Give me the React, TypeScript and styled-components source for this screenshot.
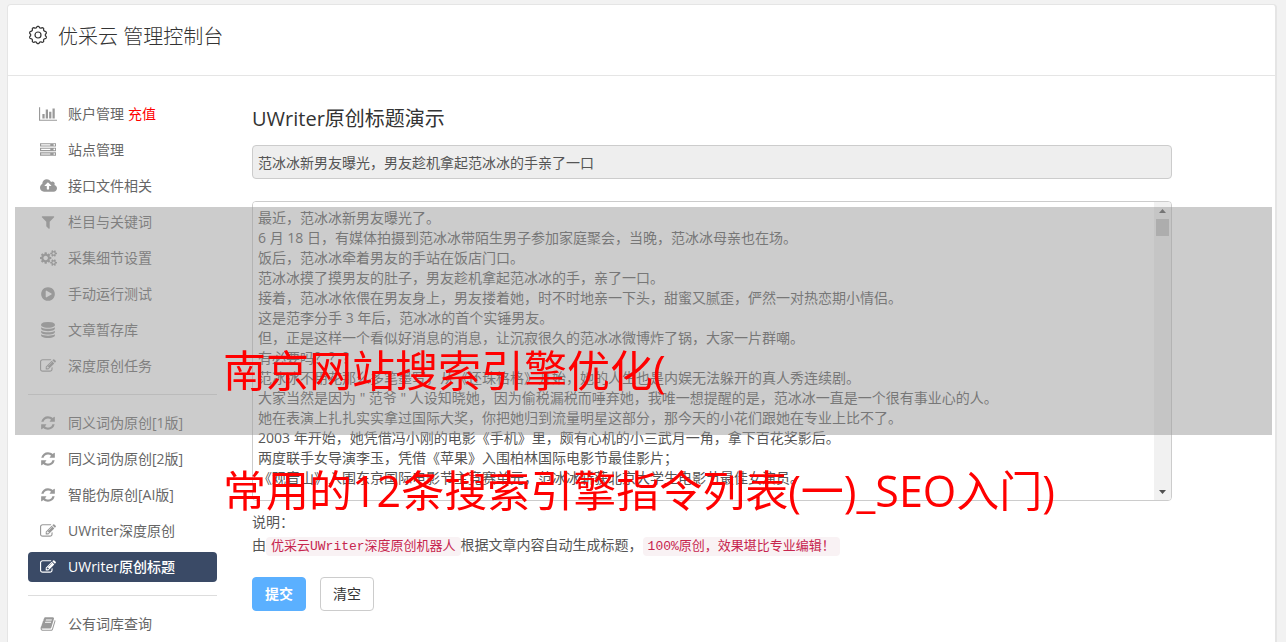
import React from "react";
import styled, { createGlobalStyle, css } from "styled-components";

const GlobalStyle = createGlobalStyle`
  *, *::before, *::after { box-sizing: border-box; }
  body {
    margin: 0;
    background: #f2f2f2;
    color: #555;
    font: 14px/20px "Open Sans", "Noto Sans CJK SC", sans-serif;
  }
  button, input, textarea { font: inherit; color: inherit; }
`;

const Page = styled.div`
  position: relative;
  min-height: 100vh;
  padding: 4px 9px 0 7px;
`;

const Card = styled.div`
  min-height: calc(100vh - 4px);
  background: #fff;
  border: 1px solid #e5e5e5;
  border-right-width: 2px;
  border-bottom: 0;
  border-radius: 4px 4px 0 0;
`;

const Header = styled.header`
  display: flex;
  align-items: flex-start;
  gap: 10px;
  height: 71px;
  padding: 17px 20px;
  border-bottom: 1px solid #e5e5e5;
  color: #333;

  svg { margin-top: 3px; }
`;

const HeaderTitle = styled.h1`
  margin: 0;
  font-size: 20px;
  line-height: 30px;
  font-weight: 300;
`;

const Columns = styled.div`
  display: flex;
  gap: 35px;
  padding: 23px 103px 0 20px;
`;

const Sidebar = styled.nav`
  flex: 0 0 189px;
`;

const MenuList = styled.ul`
  display: flex;
  flex-direction: column;
  gap: 6px;
  margin: 0;
  padding: 0;
  list-style: none;

  & + & {
    margin-top: 13px;
    padding-top: 13px;
    border-top: 1px solid #ddd;
  }
`;

const MenuRow = styled.li<{ $active?: boolean }>`
  display: flex;
  align-items: center;
  height: 30px;
  padding: 0 10px;
  border-radius: 4px;
  color: #999;
  ${(p) =>
    p.$active &&
    css`
      background: #3a4a66;
      color: #fff;
    `}
`;

const IconBox = styled.span`
  display: flex;
  justify-content: center;
  width: 20px;
  margin-right: 10px;

  svg { display: block; fill: currentColor; }
`;

const MenuLink = styled.a<{ $active?: boolean }>`
  color: ${(p) => (p.$active ? "#fff" : "#666")};
  font-weight: ${(p) => (p.$active ? 500 : 400)};
  text-decoration: none;
  white-space: nowrap;
`;

const RechargeLink = styled.a`
  margin-left: 4px;
  color: #f00;
  text-decoration: none;
`;

const Main = styled.main`
  flex: 1;
  min-width: 0;
  padding-top: 5px;
`;

const SectionTitle = styled.h2`
  margin: 0 0 11px;
  color: #333;
  font-size: 20px;
  line-height: 30px;
  font-weight: 400;
`;

const TitleInput = styled.input`
  display: block;
  width: 100%;
  height: 34px;
  padding: 0 5px;
  border: 1px solid #ccc;
  border-radius: 4px;
  background: #eee;
  outline: 0;
`;

const ArticleBox = styled.div`
  display: flex;
  height: 300px;
  margin-top: 22px;
  border: 1px solid #ccc;
  border-radius: 4px;
  overflow: hidden;
`;

const ArticleText = styled.textarea`
  flex: 1;
  min-width: 0;
  padding: 6px 5px;
  border: 0;
  outline: 0;
  resize: none;
  background: #fff;
  scrollbar-width: none;
`;

const ScrollTrack = styled.div`
  display: flex;
  flex-direction: column;
  align-items: center;
  width: 17px;
  background: #f1f1f1;
`;

const ScrollArrow = styled.span<{ $down?: boolean }>`
  display: flex;
  align-items: center;
  justify-content: center;
  height: 17px;
  margin-top: ${(p) => (p.$down ? "auto" : "0")};
  color: #505050;

  svg { display: block; fill: currentColor; }
`;

const ScrollThumb = styled.span`
  width: 13px;
  height: 17px;
  background: #c1c1c1;
`;

const Notes = styled.div`
  margin-top: 9px;
  line-height: 23px;

  p { margin: 0; }
`;

const Code = styled.code`
  padding: 2px 5px;
  border-radius: 4px;
  background: #f9f2f4;
  color: #c7254e;
  font: 13px/15px "Liberation Mono", "Noto Sans CJK SC", monospace;
`;

const Actions = styled.div`
  display: flex;
  gap: 14px;
  margin-top: 21px;
`;

const Button = styled.button<{ $primary?: boolean }>`
  width: 54px;
  height: 34px;
  padding: 0;
  border: 1px solid ${(p) => (p.$primary ? "#5bb0ff" : "#ccc")};
  border-radius: 4px;
  background: ${(p) => (p.$primary ? "#5bb0ff" : "#fff")};
  color: ${(p) => (p.$primary ? "#fff" : "#333")};
  font-weight: ${(p) => (p.$primary ? 700 : 400)};
`;

const Shade = styled.div`
  position: absolute;
  top: 207px;
  left: 15px;
  right: 14px;
  height: 228px;
  background: rgba(153, 153, 153, 0.5);
  pointer-events: none;
`;

const Caption = styled.div`
  position: absolute;
  top: 311px;
  left: 0;
  right: 0;
  display: flex;
  justify-content: center;
  padding-right: 8px;
  color: #f00;
  font-size: 43px;
  line-height: 120px;
  white-space: nowrap;
  pointer-events: none;

  p { margin: 0; }
`;

type Glyph = { width: number; d: string };

const glyphs: Record<string, Glyph> = {
  chart: {
    width: 2048,
    d: "M640 896v512h-256v-512h256zM1024 384v1024h-256v-1024h256zM2048 1536v128h-2048v-1536h128v1408h1920zM1408 640v768h-256v-768h256zM1792 256v1152h-256v-1152h256z",
  },
  server: {
    width: 1792,
    d: "M128 1408h1024v-128h-1024v128zM128 896h1024v-128h-1024v128zM1696 1344q0-40-28-68t-68-28-68 28-28 68 28 68 68 28 68-28 28-68zM128 384h1024v-128h-1024v128zM1696 832q0-40-28-68t-68-28-68 28-28 68 28 68 68 28 68-28 28-68zM1696 320q0-40-28-68t-68-28-68 28-28 68 28 68 68 28 68-28 28-68zM1792 1152v384h-1792v-384h1792zM1792 640v384h-1792v-384h1792zM1792 128v384h-1792v-384h1792z",
  },
  upload: {
    width: 1920,
    d: "M1280 864q0-14-9-23l-352-352q-9-9-23-9t-23 9l-351 351q-10 12-10 24 0 14 9 23t23 9h224v352q0 13 9.5 22.5t22.5 9.5h192q13 0 22.5-9.5t9.5-22.5v-352h224q13 0 22.5-9.5t9.5-22.5zM1920 1152q0 159-112.5 271.5t-271.5 112.5h-1088q-185 0-316.5-131.5t-131.5-316.5q0-130 70-240t188-165q-2-30-2-43 0-212 150-362t362-150q156 0 285.5 87t188.5 231q71-62 166-62 106 0 181 75t75 181q0 76-41 138 130 31 213.5 135.5t83.5 238.5z",
  },
  filter: {
    width: 1792,
    d: "M1595 295q17 41-14 70l-493 493v742q0 42-39 59-13 5-25 5-27 0-45-19l-256-256q-19-19-19-45v-486l-493-493q-31-29-14-70 17-39 59-39h1280q42 0 59 39z",
  },
  cogs: {
    width: 1920,
    d: "M896 896q0-106-75-181t-181-75-181 75-75 181 75 181 181 75 181-75 75-181zm768 512q0-52-38-90t-90-38-90 38-38 90q0 53 37.5 90.5t90.5 37.5 90.5-37.5 37.5-90.5zm0-1024q0-52-38-90t-90-38-90 38-38 90q0 53 37.5 90.5t90.5 37.5 90.5-37.5 37.5-90.5zm-384 421v185q0 10-7 19.5t-16 10.5l-155 24q-11 35-32 76 34 48 90 115 7 11 7 20 0 12-7 19-23 30-82.5 89.5t-78.5 59.5q-11 0-21-7l-115-90q-37 19-77 31-11 108-23 155-7 24-30 24h-186q-11 0-20-7.5t-10-17.5l-23-153q-34-10-75-31l-118 89q-7 7-20 7-11 0-21-8-144-133-144-160 0-9 7-19 10-14 41-53t47-61q-23-44-35-82l-152-24q-10-1-17-9.5t-7-19.5v-185q0-10 7-19.5t16-10.5l155-24q11-35 32-76-34-48-90-115-7-11-7-20 0-12 7-20 22-30 82-89t79-59q11 0 21 7l115 90q34-18 77-32 11-108 23-154 7-24 30-24h186q11 0 20 7.5t10 17.5l23 153q34 10 75 31l118-89q8-7 20-7 11 0 21 8 144 133 144 160 0 8-7 19-12 16-42 54t-45 60q23 48 34 82l152 23q10 2 17 10.5t7 19.5zm640 533v140q0 16-149 31-12 27-30 52 51 113 51 138 0 4-4 7-122 71-124 71-8 0-46-47t-52-68q-20 2-30 2t-30-2q-14 21-52 68t-46 47q-2 0-124-71-4-3-4-7 0-25 51-138-18-25-30-52-149-15-149-31v-140q0-16 149-31 13-29 30-52-51-113-51-138 0-4 4-7 4-2 35-20t59-34 30-16q8 0 46 46.5t52 67.5q20-2 30-2t30 2q51-71 92-112l6-2q4 0 124 70 4 3 4 7 0 25-51 138 17 23 30 52 149 15 149 31zm0-1024v140q0 16-149 31-12 27-30 52 51 113 51 138 0 4-4 7-122 71-124 71-8 0-46-47t-52-68q-20 2-30 2t-30-2q-14 21-52 68t-46 47q-2 0-124-71-4-3-4-7 0-25 51-138-18-25-30-52-149-15-149-31v-140q0-16 149-31 13-29 30-52-51-113-51-138 0-4 4-7 4-2 35-20t59-34 30-16q8 0 46 46.5t52 67.5q20-2 30-2t30 2q51-71 92-112l6-2q4 0 124 70 4 3 4 7 0 25-51 138 17 23 30 52 149 15 149 31z",
  },
  play: {
    width: 1792,
    d: "M896 128q209 0 385.5 103t279.5 279.5 103 385.5-103 385.5-279.5 279.5-385.5 103-385.5-103-279.5-279.5-103-385.5 103-385.5 279.5-279.5 385.5-103zm384 823q32-18 32-55t-32-55l-544-320q-31-19-64-1-32 19-32 56v640q0 37 32 56 16 8 32 8 17 0 32-9z",
  },
  database: {
    width: 1792,
    d: "M896 768q237 0 443-43t325-127v170q0 69-103 128t-280 93.5-385 34.5-385-34.5-280-93.5-103-128v-170q119 84 325 127t443 43zm0 768q237 0 443-43t325-127v170q0 69-103 128t-280 93.5-385 34.5-385-34.5-280-93.5-103-128v-170q119 84 325 127t443 43zm0-384q237 0 443-43t325-127v170q0 69-103 128t-280 93.5-385 34.5-385-34.5-280-93.5-103-128v-170q119 84 325 127t443 43zm0-1152q208 0 385 34.5t280 93.5 103 128v128q0 69-103 128t-280 93.5-385 34.5-385-34.5-280-93.5-103-128v-128q0-69 103-128t280-93.5 385-34.5z",
  },
  edit: {
    width: 1792,
    d: "M888 1184l116-116-152-152-116 116v56h96v96h56zm440-720q-16-16-33 1l-350 350q-17 17-1 33t33-1l350-350q17-17 1-33zm80 594v190q0 119-84.5 203.5t-203.5 84.5h-832q-119 0-203.5-84.5t-84.5-203.5v-832q0-119 84.5-203.5t203.5-84.5h832q63 0 117 25 15 7 18 23 3 17-9 29l-49 49q-14 14-32 8-23-6-45-6h-832q-66 0-113 47t-47 113v832q0 66 47 113t113 47h832q66 0 113-47t47-113v-126q0-13 9-22l64-64q15-15 35-7t20 29zm-96-738l288 288-672 672h-288v-288zm444 132l-92 92-288-288 92-92q28-28 68-28t68 28l152 152q28 28 28 68t-28 68z",
  },
  refresh: {
    width: 1792,
    d: "M1639 1056q0 5-1 7-64 268-268 434.5t-478 166.5q-146 0-282.5-55t-243.5-157l-129 129q-19 19-45 19t-45-19-19-45v-448q0-26 19-45t45-19h448q26 0 45 19t19 45-19 45l-137 137q71 66 161 102t187 36q134 0 250-65t186-179q11-17 53-117 8-23 30-23h192q13 0 22.5 9.5t9.5 22.5zm25-800v448q0 26-19 45t-45 19h-448q-26 0-45-19t-19-45 19-45l138-138q-148-137-349-137-134 0-250 65t-186 179q-11 17-53 117-8 23-30 23h-199q-13 0-22.5-9.5t-9.5-22.5v-7q65-268 270-434.5t480-166.5q146 0 284 55.5t245 156.5l130-129q19-19 45-19t45 19 19 45z",
  },
  book: {
    width: 1792,
    d: "M1703 478q40 57 18 129l-275 906q-19 64-76.5 107.5t-122.5 43.5h-923q-77 0-148.5-53.5t-99.5-131.5q-24-67-2-127 0-4 3-27t4-37q1-8-3-21.5t-3-19.5q2-11 8-21t16.5-23.5 16.5-23.5q23-38 45-91.5t30-91.5q3-10 .5-30t-.5-28q3-11 17-28t17-23q21-36 42-92t25-90q1-9-2.5-32t.5-28q4-13 22-30.5t22-22.5q19-26 42.5-84.5t27.5-96.5q1-8-3-25.5t-2-26.5q2-8 9-18t18-23 17-21q8-12 16.5-30.5t15-35 16-36 19.5-32 26.5-23.5 36-11.5 47.5 5.5l-1 3q38-9 51-9h761q74 0 114 56t18 130l-274 906q-36 119-71.5 153.5t-128.5 34.5h-869q-27 0-38 15-11 16-1 43 24 70 144 70h923q29 0 56-15.5t35-41.5l300-987q7-22 5-57 38 15 59 43zm-1064 2q-4 13 2 22.5t20 9.5h608q13 0 25.5-9.5t16.5-22.5l21-64q4-13-2-22.5t-20-9.5h-608q-13 0-25.5 9.5t-16.5 22.5zm-83 256q-4 13 2 22.5t20 9.5h608q13 0 25.5-9.5t16.5-22.5l21-64q4-13-2-22.5t-20-9.5h-608q-13 0-25.5 9.5t-16.5 22.5z",
  },
};

type Item = { icon: string; label: string; active?: boolean; recharge?: boolean };

const groups: Item[][] = [
  [
    { icon: "chart", label: "账户管理", recharge: true },
    { icon: "server", label: "站点管理" },
    { icon: "upload", label: "接口文件相关" },
    { icon: "filter", label: "栏目与关键词" },
    { icon: "cogs", label: "采集细节设置" },
    { icon: "play", label: "手动运行测试" },
    { icon: "database", label: "文章暂存库" },
    { icon: "edit", label: "深度原创任务" },
  ],
  [
    { icon: "refresh", label: "同义词伪原创[1版]" },
    { icon: "refresh", label: "同义词伪原创[2版]" },
    { icon: "refresh", label: "智能伪原创[AI版]" },
    { icon: "edit", label: "UWriter深度原创" },
    { icon: "edit", label: "UWriter原创标题", active: true },
  ],
  [{ icon: "book", label: "公有词库查询" }],
];

const article = `最近，范冰冰新男友曝光了。
6 月 18 日，有媒体拍摄到范冰冰带陌生男子参加家庭聚会，当晚，范冰冰母亲也在场。
饭后，范冰冰牵着男友的手站在饭店门口。
范冰冰摸了摸男友的肚子，男友趁机拿起范冰冰的手，亲了一口。
接着，范冰冰依偎在男友身上，男友搂着她，时不时地亲一下头，甜蜜又腻歪，俨然一对热恋期小情侣。
这是范李分手 3 年后，范冰冰的首个实锤男友。
但，正是这样一个看似好消息的消息，让沉寂很久的范冰冰微博炸了锅，大家一片群嘲。
有必要吗？？？
范冰冰不用花那么多笔墨写，从《还珠格格》开始，她的人生也是内娱无法躲开的真人秀连续剧。
大家当然是因为 " 范爷 " 人设知晓她，因为偷税漏税而唾弃她，我唯一想提醒的是，范冰冰一直是一个很有事业心的人。
她在表演上扎扎实实拿过国际大奖，你把她归到流量明星这部分，那今天的小花们跟她在专业上比不了。
2003 年开始，她凭借冯小刚的电影《手机》里，颇有心机的小三武月一角，拿下百花奖影后。
两度联手女导演李玉，凭借《苹果》入围柏林国际电影节最佳影片；
《观音山》入围东京国际电影节主竞赛单元，范冰冰斩获北京大学生电影节最佳女演员。
`;

// Outline of a gear with ten rounded teeth, centred in a 20x20 box.
const gearOutline =
  Array.from({ length: 120 }, (_, i) => {
    const angle = (i / 120) * Math.PI * 2 - Math.PI / 2;
    const radius = 8 + 0.7 * Math.tanh(2 * Math.cos((i / 12) * Math.PI * 2));
    const x = (10 + radius * Math.cos(angle)).toFixed(2);
    const y = (10 + radius * Math.sin(angle)).toFixed(2);
    return `${i ? "L" : "M"}${x} ${y}`;
  }).join("") + "z";

function GearIcon() {
  return (
    <svg width="20" height="20" viewBox="0 0 20 20" fill="none" stroke="currentColor" strokeWidth="1.2" aria-hidden="true">
      <path d={gearOutline} strokeLinejoin="round" />
      <circle cx="10" cy="10" r="3" />
    </svg>
  );
}

function Icon({ name }: { name: string }) {
  const { width, d } = glyphs[name];
  return (
    <svg width={Math.round(width / 112)} height="16" viewBox={`0 0 ${width} 1792`} aria-hidden="true">
      <path d={d} />
    </svg>
  );
}

export default function App() {
  return (
    <Page lang="zh-CN">
      <GlobalStyle />
      <Card>
        <Header>
          <GearIcon />
          <HeaderTitle>优采云 管理控制台</HeaderTitle>
        </Header>
        <Columns>
          <Sidebar aria-label="管理菜单">
            {groups.map((items, index) => (
              <MenuList key={index}>
                {items.map((item) => (
                  <MenuRow key={item.label} $active={item.active}>
                    <IconBox>
                      <Icon name={item.icon} />
                    </IconBox>
                    <MenuLink href="#" $active={item.active}>
                      {item.label}
                    </MenuLink>
                    {item.recharge && <RechargeLink href="#">充值</RechargeLink>}
                  </MenuRow>
                ))}
              </MenuList>
            ))}
          </Sidebar>
          <Main>
            <SectionTitle>UWriter原创标题演示</SectionTitle>
            <TitleInput aria-label="标题" readOnly defaultValue="范冰冰新男友曝光，男友趁机拿起范冰冰的手亲了一口" />
            <ArticleBox>
              <ArticleText aria-label="文章内容" defaultValue={article} spellCheck={false} />
              <ScrollTrack aria-hidden="true">
                <ScrollArrow>
                  <svg width="7" height="4" viewBox="0 0 7 4"><path d="M0 4L3.5 0L7 4z" /></svg>
                </ScrollArrow>
                <ScrollThumb />
                <ScrollArrow $down>
                  <svg width="7" height="4" viewBox="0 0 7 4"><path d="M0 0L3.5 4L7 0z" /></svg>
                </ScrollArrow>
              </ScrollTrack>
            </ArticleBox>
            <Notes>
              <p>说明：</p>
              <p>
                由<Code>优采云UWriter深度原创机器人</Code>根据文章内容自动生成标题，<Code>100%原创，效果堪比专业编辑！</Code>
              </p>
            </Notes>
            <Actions>
              <Button type="button" $primary>提交</Button>
              <Button type="button">清空</Button>
            </Actions>
          </Main>
        </Columns>
      </Card>
      <Shade />
      <Caption>
        <div>
          <p>南京网站搜索引擎优化(</p>
          <p>常用的12条搜索引擎指令列表(一)_SEO入门)</p>
        </div>
      </Caption>
    </Page>
  );
}
